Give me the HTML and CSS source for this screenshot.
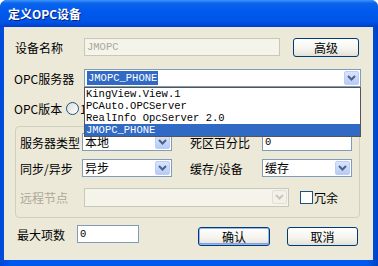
FILE: index.html
```html
<!DOCTYPE html>
<html lang="zh-CN">
<head>
  <meta charset="UTF-8">
  <title>定义OPC设备</title>
  <link rel="stylesheet" href="styles.css">
</head>
<body>
  <div class="window">
    <div class="titlebar">定义OPC设备</div>
    <div class="client">
      <div class="row row-name">
        <span class="label w69">设备名称</span>
        <div class="field disabled w196">JMOPC</div>
        <button class="btn btn-adv">高级</button>
      </div>

      <div class="row row-server">
        <span class="label w70">OPC服务器</span>
        <div class="combo-wrap">
          <div class="field combo w277">
            <span class="sel">JMOPC_PHONE</span>
            <span class="arrow"><svg width="9" height="6" viewBox="0 0 9 6"><path d="M1 1 L4.5 4.5 L8 1" fill="none" stroke="#4d6185" stroke-width="2"/></svg></span>
          </div>
          <ul class="droplist">
            <li>KingView.View.1</li>
            <li>PCAuto.OPCServer</li>
            <li>RealInfo OpcServer 2.0</li>
            <li class="hot">JMOPC_PHONE</li>
          </ul>
        </div>
      </div>

      <div class="row row-ver">
        <span class="label w52">OPC版本</span>
        <span class="radio"></span>
        <span class="label">1.0</span>
      </div>

      <div class="group">
        <div class="row">
          <span class="label w62">服务器类型</span>
          <div class="field combo w90">
            <span class="val">本地</span>
            <span class="arrow"><svg width="9" height="6" viewBox="0 0 9 6"><path d="M1 1 L4.5 4.5 L8 1" fill="none" stroke="#4d6185" stroke-width="2"/></svg></span>
          </div>
          <span class="label w72 ml18">死区百分比</span>
          <div class="field w90">0</div>
        </div>
        <div class="row row-b">
          <span class="label w62">同步/异步</span>
          <div class="field combo w90">
            <span class="val">异步</span>
            <span class="arrow"><svg width="9" height="6" viewBox="0 0 9 6"><path d="M1 1 L4.5 4.5 L8 1" fill="none" stroke="#4d6185" stroke-width="2"/></svg></span>
          </div>
          <span class="label w72 ml18">缓存/设备</span>
          <div class="field combo w90">
            <span class="val">缓存</span>
            <span class="arrow"><svg width="9" height="6" viewBox="0 0 9 6"><path d="M1 1 L4.5 4.5 L8 1" fill="none" stroke="#4d6185" stroke-width="2"/></svg></span>
          </div>
        </div>
        <div class="row row-c">
          <span class="label off w64">远程节点</span>
          <div class="field combo disabled w205">
            <span class="val"></span>
            <span class="arrow off"><svg width="9" height="6" viewBox="0 0 9 6"><path d="M1 1 L4.5 4.5 L8 1" fill="none" stroke="#c9c7ba" stroke-width="2"/></svg></span>
          </div>
          <span class="check"></span>
          <span class="label">冗余</span>
        </div>
      </div>

      <div class="row row-bottom">
        <span class="label w60">最大项数</span>
        <div class="field w62">0</div>
        <button class="btn btn-ok">确认</button>
        <button class="btn btn-cancel">取消</button>
      </div>
    </div>
  </div>
</body>
</html>
```

FILE: styles.css
```css
body {
  margin: 0;
  background: #ffffff;
  font-family: "Noto Sans CJK SC", "Liberation Sans", sans-serif;
  font-size: 12px;
  color: #000000;
}
.window {
  width: 378px;
  height: 266px;
  display: flex;
  flex-direction: column;
  background: linear-gradient(90deg, #0049d6 0%, #0058ee 3%, #0058ee 97%, #0040c8 100%);
  border-radius: 7px 7px 0 0;
  overflow: hidden;
}
.titlebar {
  height: 27px;
  line-height: 27px;
  padding-left: 8px;
  color: #ffffff;
  font-weight: bold;
  font-size: 12px;
  background: linear-gradient(#3d95ff 0%, #0a64ea 12%, #0058ee 45%, #0055e5 80%, #003fd0 100%);
  text-shadow: 1px 1px 0 #0a1e80;
}
.client {
  flex: 1;
  margin: 0 5px 6px 4px;
  background: #ece9d8;
  position: relative;
}
.row {
  display: flex;
  align-items: center;
  height: 18px;
}
.label {
  white-space: nowrap;
  flex-shrink: 0;
}
.label.off {
  color: #aca899;
}
.w52 { width: 52px; }
.w60 { width: 60px; }
.w62 { width: 62px; }
.w64 { width: 64px; }
.w69 { width: 69px; }
.w70 { width: 70px; }
.w72 { width: 72px; }
.ml18 { margin-left: 18px; }

.row-name {
  margin-top: 11px;
  padding-left: 11px;
}
.row-server {
  margin-top: 13px;
  padding-left: 10px;
}
.row-ver {
  margin-top: 12px;
  padding-left: 10px;
}

.field {
  box-sizing: border-box;
  height: 18px;
  border: 1px solid #7f9db9;
  background: #ffffff;
  font-family: "Liberation Mono", "Noto Sans CJK SC", monospace;
  font-size: 10.5px;
  line-height: 16px;
  padding-left: 2px;
  display: flex;
  align-items: center;
  flex-shrink: 0;
}
.field.disabled {
  background: #f5f4ea;
  border-color: #c9c7ba;
  color: #aca899;
}
.w62 { width: 62px; }
.w90 { width: 90px; }
.w196 { width: 196px; }
.w205 { width: 205px; }
.w277 { width: 277px; }

.combo {
  padding-right: 1px;
}
.combo .val {
  flex: 1;
  font-family: "Noto Sans CJK SC", sans-serif;
  font-size: 12px;
}
.combo .sel {
  background: #316ac5;
  color: #ffffff;
  padding: 0 1px;
  line-height: 14px;
}
.combo .arrow {
  margin-left: auto;
  width: 15px;
  height: 14px;
  box-sizing: border-box;
  border: 1px solid #b9cdf8;
  border-radius: 2px;
  background: linear-gradient(#d8e5fd, #b6cbf7);
  display: flex;
  align-items: center;
  justify-content: center;
}
.combo .arrow.off {
  background: #f2f1ea;
  border-color: #e0dfd6;
}

.combo-wrap {
  position: relative;
}
.droplist {
  position: absolute;
  left: 0;
  top: 18px;
  width: 277px;
  box-sizing: border-box;
  margin: 0;
  padding: 0;
  list-style: none;
  background: #ffffff;
  border: 1px solid #555555;
  font-family: "Liberation Mono", monospace;
  font-size: 10.5px;
  z-index: 5;
}
.droplist li {
  height: 12px;
  line-height: 12px;
  padding-left: 1px;
  white-space: nowrap;
}
.droplist li.hot {
  background: #316ac5;
  color: #ffffff;
}

.radio {
  width: 11px;
  height: 11px;
  border: 1px solid #1c5180;
  border-radius: 50%;
  background: linear-gradient(135deg, #dcdcd6, #ffffff);
  margin-right: 1px;
  flex-shrink: 0;
}
.check {
  width: 11px;
  height: 11px;
  border: 1px solid #1c5180;
  background: #ffffff;
  margin: 0 1px 0 11px;
  flex-shrink: 0;
}

.group {
  margin: 9px 0 0 11px;
  width: 345px;
  height: 92px;
  box-sizing: border-box;
  border: 1px solid #d0d0bf;
  border-radius: 4px;
  padding: 6px 0 0 4px;
}
.row-b {
  margin-top: 8px;
}
.row-c {
  margin-top: 11px;
}
.row-c .field {
  height: 19px;
}

.row-bottom {
  margin-top: 7px;
  padding-left: 13px;
}

.btn {
  box-sizing: border-box;
  height: 19px;
  padding: 0;
  border: 1px solid #003c74;
  border-radius: 3px;
  background: linear-gradient(#ffffff 0%, #f4f3ee 60%, #e3e1d6 100%);
  font-family: "Noto Sans CJK SC", sans-serif;
  font-size: 12px;
  color: #000000;
  flex-shrink: 0;
}
.btn-adv {
  width: 66px;
  margin-left: 13px;
}
.btn-ok {
  width: 72px;
  margin-left: 59px;
  margin-top: 4px;
  box-shadow: inset 0 0 0 1px #97b6ef, inset 0 -1px 0 1px #7fa2e3;
}
.btn-cancel {
  width: 71px;
  margin-left: 17px;
  margin-top: 4px;
}
```
